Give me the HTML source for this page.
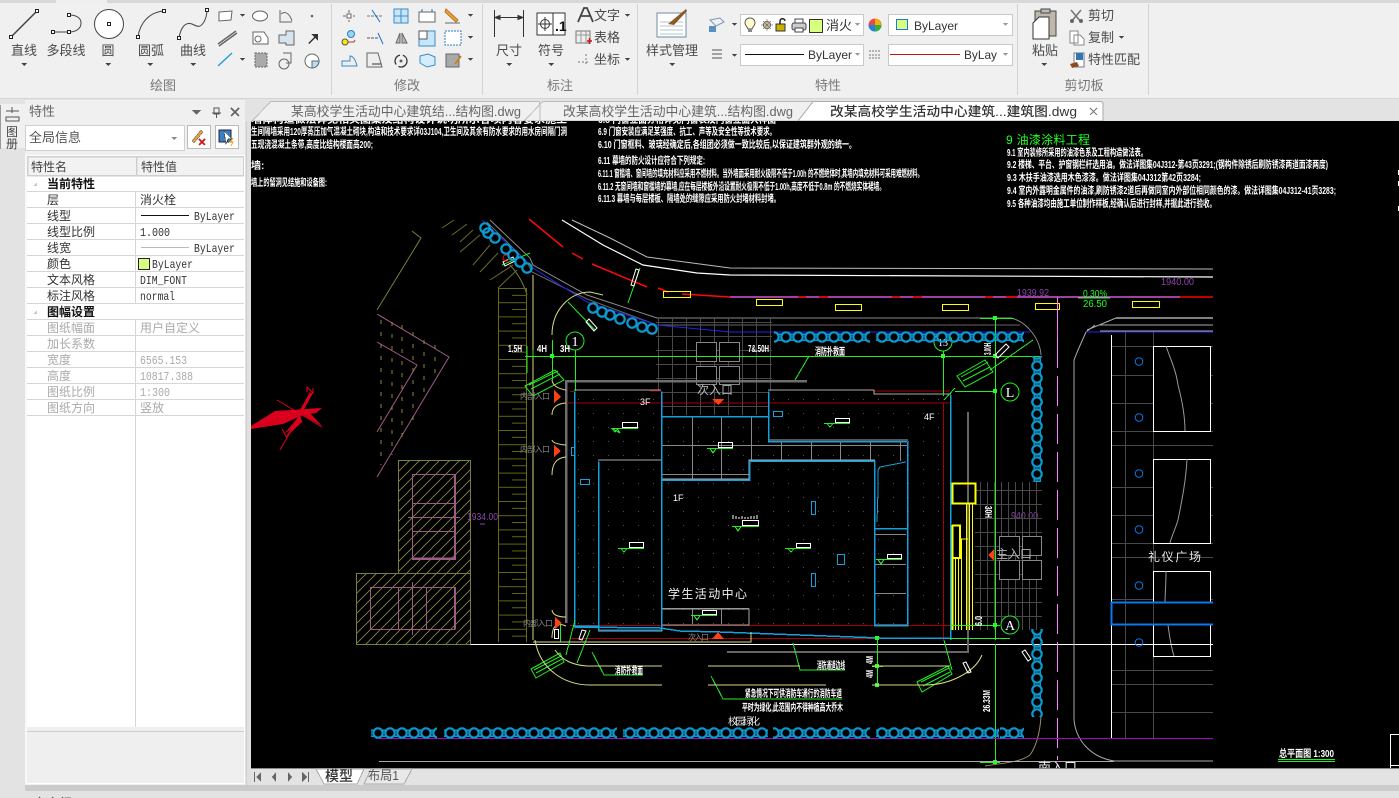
<!DOCTYPE html>
<html lang="zh"><head><meta charset="utf-8"><title>CAD</title>
<style>
html,body{margin:0;padding:0;background:#e3e3e3;width:1399px;height:798px;overflow:hidden}
svg{display:block;position:absolute;left:0;top:0}
text{font-family:"Liberation Sans","Noto Sans CJK SC",sans-serif}
.r{font-size:13px;fill:#4a4a4a;text-anchor:middle}
.rs{font-size:13px;fill:#4a4a4a}
.g{font-size:13px;fill:#777;text-anchor:middle}
.t{font-size:12px;fill:#333;font-family:"Liberation Mono","WenQuanYi Zen Hei","Noto Sans CJK SC",monospace}
.d{font-size:12px;fill:#aaa;font-family:"Liberation Mono","WenQuanYi Zen Hei","Noto Sans CJK SC",monospace}
.b{font-size:12px;fill:#111;font-weight:700;font-family:"Liberation Sans","Noto Sans CJK SC",sans-serif}
.c{font-size:10px;fill:#fff;font-weight:700;font-family:"Liberation Sans","Noto Sans CJK SC",sans-serif}
.n{fill:none}
</style></head><body>
<svg width="1399" height="798" viewBox="0 0 1399 798" xmlns="http://www.w3.org/2000/svg" shape-rendering="crispEdges">
<defs>
<pattern id="grid" width="14" height="14" patternUnits="userSpaceOnUse"><path d="M0 .5H14M.5 0V14" stroke="#484848" fill="none"/></pattern>
<pattern id="gridR" width="7" height="14" patternUnits="userSpaceOnUse"><path d="M0 .5H7M.5 0V14" stroke="#484848" fill="none"/></pattern>
<pattern id="dots" width="15" height="14" patternUnits="userSpaceOnUse"><rect x="8" y="7" width="1" height="1" fill="#505050"/></pattern>
<pattern id="hatch" width="10" height="10" patternUnits="userSpaceOnUse"><path d="M-2 12L12 -2M-2 2L2 -2M8 12L12 8" stroke="#8a8a4a" stroke-width=".8" fill="none" shape-rendering="auto"/></pattern>
<pattern id="tb" width="12" height="12" patternUnits="userSpaceOnUse" patternTransform="translate(0,727)"><circle cx="6" cy="6" r="4.700" fill="none" stroke="#0b9ad0" stroke-width="2.200" shape-rendering="auto"/><path d="M0 9H3M9 9H12M0 3H2M10 3H12" stroke="#0b9ad0" stroke-width="1.500"/></pattern>
<pattern id="tt" width="12" height="12" patternUnits="userSpaceOnUse" patternTransform="translate(0,331)"><circle cx="6" cy="6" r="4.700" fill="none" stroke="#0b9ad0" stroke-width="2.200" shape-rendering="auto"/><path d="M0 9H3M9 9H12M0 3H2M10 3H12" stroke="#0b9ad0" stroke-width="1.500"/></pattern>
<pattern id="tv" width="12" height="12" patternUnits="userSpaceOnUse" patternTransform="translate(1031,0)"><circle cx="6" cy="6" r="4.700" fill="none" stroke="#0b9ad0" stroke-width="2.200" shape-rendering="auto"/><path d="M3 0V3M3 9V12M9 0V2M9 10V12" stroke="#0b9ad0" stroke-width="1.500"/></pattern>
<pattern id="park" width="29" height="14.2" patternUnits="userSpaceOnUse" patternTransform="translate(498,288)"><path d="M0 .5H29M14 7.5H29" stroke="#5f6a10" fill="none"/></pattern>
<clipPath id="cv"><rect x="251" y="121" width="1148" height="647"/></clipPath>
<clipPath id="cb"><rect x="742" y="15" width="112" height="20"/></clipPath>
</defs>

<!-- chrome background -->
<rect width="1399" height="798" fill="#e3e3e3"/>
<rect x="0" y="0" width="1399" height="3" fill="#d8d8d8"/>
<rect x="56" y="0" width="51" height="3" fill="#efefef"/>
<rect x="0" y="3" width="1399" height="95" fill="#f0f0f0"/>
<rect x="0" y="98" width="1399" height="1" fill="#d5d5d5"/>
<g fill="#d2d2d2"><rect x="331" y="4" width="1" height="91"/><rect x="482" y="4" width="1" height="91"/><rect x="637" y="4" width="1" height="91"/><rect x="1017" y="4" width="1" height="91"/><rect x="1148" y="4" width="1" height="91"/></g>

<!-- ribbon labels -->
<text class="r" x="24" y="55">直线</text><text class="r" x="66" y="55">多段线</text><text class="r" x="108" y="55">圆</text><text class="r" x="151" y="55">圆弧</text><text class="r" x="193" y="55">曲线</text>
<text class="g" x="163" y="90">绘图</text><text class="g" x="407" y="90">修改</text><text class="g" x="560" y="90">标注</text><text class="g" x="828" y="90">特性</text><text class="g" x="1084" y="90">剪切板</text>
<text class="r" x="509" y="55">尺寸</text><text class="r" x="551" y="55">符号</text><text class="rs" x="594" y="20">文字</text><text class="rs" x="594" y="42">表格</text><text class="rs" x="594" y="64">坐标</text>
<text class="r" x="672" y="55">样式管理</text><text class="r" x="1045" y="55">粘贴</text>
<text class="rs" x="1088" y="20">剪切</text><text class="rs" x="1088" y="42">复制</text><text class="rs" x="1088" y="64">特性匹配</text>
<!-- dropdown arrows -->
<g fill="#444"><path d="M21 63h6l-3 3zM105 63h6l-3 3zM147 63h6l-3 3zM190 63h6l-3 3zM240 14h5l-2.500 3zM240 58h5l-2.500 3zM468 14h5l-2.500 3zM468 36h5l-2.500 3zM468 58h5l-2.500 3zM506 63h6l-3 3zM548 63h6l-3 3zM625 14h5l-2.500 3zM625 58h5l-2.500 3zM669 63h6l-3 3zM732 23h5l-2.500 3zM732 54h5l-2.500 3zM1041 63h6l-3 3zM1119 36h5l-2.500 3z"/></g>
<!-- big draw icons -->
<g shape-rendering="auto" fill="none" stroke="#444">
<path d="M11 37L37 11" stroke-width="1.500"/>
<path d="M53 32H69M69 15C78 15 81 19 81 23C81 28 77 32 69 32"/>
<circle cx="109" cy="24" r="14.500" fill="#fff"/>
<path d="M138 37C140 22 150 12 164 11"/>
<path d="M179 38C181 26 186 22 192 24C198 27 200 28 204 22C206 18 207 14 207 10"/>
</g>
<g fill="#fff" stroke="#222"><rect x="9.500" y="35.500" width="3" height="3"/><rect x="35.500" y="9.500" width="3" height="3"/><rect x="51.500" y="30.500" width="3" height="3"/><rect x="67.500" y="30.500" width="3" height="3"/><rect x="67.500" y="13.500" width="3" height="3"/><rect x="107.500" y="22.500" width="3" height="3"/><rect x="136.500" y="35.500" width="3" height="3"/><rect x="162.500" y="9.500" width="3" height="3"/><rect x="177.500" y="36.500" width="3" height="3"/><rect x="205.500" y="8.500" width="3" height="3"/></g>
<!-- small draw icons -->
<g shape-rendering="auto" fill="none" stroke="#666">
<path d="M219 12L232 11L231 20L219 21Z" fill="#fff"/>
<ellipse cx="260" cy="16" rx="7.500" ry="5" fill="#fff"/>
<path d="M280 10V22H292M281 14C286 10 290 15 292 21"/>
<circle cx="312" cy="16" r=".8" fill="#444"/>
<path d="M218 44L236 31M219 46L237 33" stroke-width="1.500"/>
<path d="M253 32H264L268 38V44H253Z" fill="#fff"/><circle cx="258" cy="39" r="3"/>
<path d="M279 35H286V31H294V45H286V43H279Z" fill="#d6e4f0"/>
<path d="M218 66L232 53" stroke="#1a9ae0" stroke-width="1.300"/>
<path d="M255 53H267V67H255Z" fill="#aaa" stroke-dasharray="2 1"/>
<path d="M279 64a5 5 0 1 0 10 0a5 5 0 1 0-10 0M283 53H291V63H286" fill="#eee"/>
<circle cx="312" cy="61" r="7" fill="#fff"/><path d="M312 61H319A7 7 0 0 1 312 68Z" fill="#aee0fa"/>
</g>
<path d="M308 43L316 35L317 36L309 44ZM311 34H318V41Z" fill="#333"/>
<!-- modify icons -->
<g shape-rendering="auto" fill="none" stroke="#666">
<path d="M343 16H355M349 10V22" stroke-dasharray="3 2"/><rect x="347" y="14" width="4" height="4" fill="#fff"/>
<path d="M367 16H383" stroke="#777" stroke-dasharray="3 1"/><path d="M372 10L380 22" stroke="#1a70c0"/>
<path d="M394 9H408V23H394ZM401 9V23M394 16H408" stroke="#3a8cc8" fill="#c8e6fa"/>
<path d="M419 12H435V22H419Z" fill="#fff"/><path d="M422 9V12M432 9V12" stroke="#1a70c0"/>
<path d="M446 9L458 20L456 22L445 12Z" fill="#e9a23b" stroke="#b8791c"/><path d="M445 23H460"/>
<circle cx="351" cy="34" r="3.500" fill="#9ad2f4" stroke="#2a80c0"/><circle cx="345" cy="42" r="3" fill="#ffe800" stroke="#555"/><path d="M348 42H354L355 40" stroke="#b03a20"/>
<path d="M367 38H378" stroke="#555" stroke-dasharray="3 1"/><path d="M378 33L383 44" stroke="#1a70c0"/>
<path d="M396 43L400 33V43ZM402 33L407 43H402Z" fill="#bbb"/>
<rect x="419" y="31" width="16" height="15" fill="#c8e6fa" stroke="#3a8cc8"/><rect x="419" y="31" width="8" height="8" fill="#fff" stroke="#555"/>
<rect x="445" y="31" width="16" height="14" fill="#fff" stroke-dasharray="2 1" stroke="#2a80c0"/>
<path d="M342 61H350V56C354 56 356 62 357 66H342Z" stroke="#3a8cc8" fill="#eee"/>
<path d="M367 53H378L382 67H367Z" fill="#eee"/><path d="M372 64H381" stroke="#333"/>
<circle cx="401" cy="61" r="6" stroke="#333" stroke-dasharray="12 3" stroke-width="1.300"/><circle cx="401" cy="61" r="1" fill="#333"/>
<path d="M420 56L428 54L435 57V65L427 67L420 63Z" stroke="#3a8cc8" fill="#d5edfb"/>
<rect x="446" y="54" width="13" height="13" fill="#aaa"/>
<path d="M455 64L461 56" stroke="#c9802a" stroke-width="2"/>
</g>
<!-- annotate icons -->
<g shape-rendering="auto" fill="none" stroke="#333">
<path d="M494.500 10V37M523.500 10V37M495 17.500H523" />
<path d="M495 17.500L500 15.500V19.500ZM523 17.500L518 15.500V19.500Z" fill="#333"/>
<rect x="537" y="13" width="28" height="22" fill="#fff"/><path d="M553 13V35"/><circle cx="545" cy="24" r="4.500"/><path d="M538 24H552M545 17V31"/>
<path d="M578 22L584 8H587L593 22M581 16H590" stroke="#444" stroke-width="1.800"/>
<rect x="576" y="31" width="14" height="12" fill="#eee" stroke="#777"/><path d="M576 35H590M581 31V43M586 31V43" stroke="#999"/>
<path d="M587 41H592M589.500 38V44" stroke="#d01010" stroke-width="1.500"/>
<path d="M578 62H590M586 54V66" stroke="#777" stroke-dasharray="2 2"/>
</g>
<text x="555" y="31" font-size="14" font-weight="700" fill="#111">.1</text>
<!-- style icon -->
<g shape-rendering="auto">
<rect x="657" y="13" width="29" height="24" fill="#fff" stroke="#6f8aa3"/>
<path d="M660 22H683M660 26H683M660 30H683M660 34H683" stroke="#b5c3d2"/>
<path d="M668 24L686 9L687 11L674 25Z" fill="#8a5a24"/>
</g>
<!-- properties left icons -->
<g shape-rendering="auto" fill="none">
<path d="M710 20L720 18L724 22L716 26Z" stroke="#7a9ab8"/><rect x="709" y="26" width="7" height="6" fill="#5b8fc0"/>
<path d="M712 50H722M712 54H722M712 58H722" stroke="#555"/>
<circle cx="875" cy="25" r="6.500" fill="#e84a50"/><path d="M875 25V18.500A6.500 6.500 0 0 1 881 25Z" fill="#f5b000"/><path d="M875 25H881.500A6.500 6.500 0 0 1 875 31.500Z" fill="#30b040"/><path d="M875 25V31.500A6.500 6.500 0 0 1 868.500 25Z" fill="#2080e0"/>
<path d="M869 51H881M869 55H881M869 58H881" stroke="#777" stroke-dasharray="2 1"/>
</g>
<!-- combos -->
<g fill="#fff" stroke="#c9c9c9"><rect x="740.500" y="14.500" width="123" height="21"/><rect x="740.500" y="44.500" width="123" height="21"/><rect x="888.500" y="14.500" width="124" height="21"/><rect x="888.500" y="44.500" width="124" height="21"/></g>
<!-- layer combo icons -->
<g shape-rendering="auto" fill="none">
<path d="M750 18C746.500 18 745 20.500 745 23C745 25.500 747.500 27 748 29H752C752.500 27 755 25.500 755 23C755 20.500 753.500 18 750 18Z" fill="#fffcd0" stroke="#555"/><rect x="748" y="29" width="4" height="3" fill="#888"/>
<circle cx="767" cy="25" r="3.500" fill="#fff0b0" stroke="#555"/><path d="M761 25H773M767 19V31M763 21L771 29M771 21L763 29" stroke="#777" stroke-width=".7"/>
<rect x="776" y="24" width="9" height="7" fill="#c8b000" stroke="#333"/><path d="M780 24V21C780 18 785 18 785 21" stroke="#222" stroke-width="1.500"/>
<rect x="792" y="23" width="14" height="7" rx="2" fill="#ccc" stroke="#444"/><rect x="795" y="19" width="8" height="4" fill="#fff" stroke="#444"/><rect x="795" y="28" width="8" height="4" fill="#fff" stroke="#444"/>
</g>
<rect x="809.500" y="19.500" width="13" height="13" fill="#d9ff80" stroke="#333"/>
<g clip-path="url(#cb)"><text x="826" y="30" font-size="13" fill="#333">消火</text></g>
<rect x="896.500" y="19.500" width="11" height="10" fill="#d9ff80" stroke="#1c78d0"/>
<text x="914" y="30" font-size="12" fill="#333">ByLayer</text>
<path d="M745 54.500H804" stroke="#111"/><text x="808" y="59" font-size="12" fill="#333">ByLayer</text>
<path d="M890 54.500H960" stroke="#c01010"/><text x="964" y="59" font-size="12" fill="#333" textLength="33" lengthAdjust="spacingAndGlyphs">ByLay</text>
<g fill="#999"><path d="M855 23h5l-2.500 3zM855 53h5l-2.500 3zM1003 23h5l-2.500 3zM1003 53h5l-2.500 3z"/></g>
<!-- clipboard icons -->
<g shape-rendering="auto">
<path d="M1035 11H1056V36H1035Z" fill="#bfb7ab" stroke="#444"/><path d="M1041 9H1050V13H1041Z" fill="#bbb" stroke="#444"/>
<path d="M1033 23L1039 17H1049V39H1033Z" fill="#fff" stroke="#333"/>
<path d="M1071 10L1081 22M1081 10L1071 22" stroke="#777" stroke-width="1.600"/><circle cx="1072" cy="21" r="2" fill="#666"/><circle cx="1081" cy="21" r="2" fill="#666"/>
<path d="M1070 31H1078V43H1070ZM1074 35H1080L1084 39V45H1074Z" fill="#fff" stroke="#888"/>
<rect x="1074" y="53" width="10" height="14" fill="#fff" stroke="#777"/><rect x="1076" y="53" width="7" height="7" fill="#2f75b8"/>
<path d="M1070 64L1077 62L1079 66L1072 68Z" fill="#8a4a20"/>
</g>

<!-- left strip -->
<rect x="0" y="104" width="25" height="44" fill="#f0f0f0"/><rect x="0" y="105" width="1" height="44" fill="#9a9a9a"/>
<path d="M6 111H19M12 107V113M6 117H19V121H6Z" stroke="#555" fill="none"/>
<text x="6" y="136" font-size="12" fill="#444">图</text><text x="6" y="148" font-size="12" fill="#444">册</text>

<!-- palette panel -->
<rect x="25" y="100" width="220" height="685" fill="#f0f0f0"/>
<text x="29" y="116" font-size="13" fill="#666">特性</text>
<path d="M192 110h9l-4.500 5z" fill="#666"/>
<path d="M214 108h5v6h-5zM216.500 114v4M212 113h9" stroke="#555" fill="none"/>
<path d="M231 108l8 8M239 108l-8 8" stroke="#666" stroke-width="1.600"/>
<rect x="25.500" y="125.500" width="159" height="25" fill="#fff" stroke="#cfcfcf"/>
<text x="29" y="142" font-size="13" fill="#555">全局信息</text><path d="M171 137h6l-3 3z" fill="#888"/>
<rect x="187.500" y="125.500" width="23" height="23" fill="#fff" stroke="#bbb"/><path d="M192 141L201 130L203 132L194 143Z" fill="#e2a53b" stroke="#555" stroke-width=".5"/><path d="M199 139l6 6M205 139l-6 6" stroke="#d01818" stroke-width="1.800"/>
<rect x="215.500" y="125.500" width="23" height="23" fill="#fff" stroke="#bbb"/><rect x="219" y="130" width="12" height="12" fill="#3a80c0" stroke="#224"/><path d="M224 131L232 139L228 139L226 144Z" fill="#fff" stroke="#333" stroke-width=".6"/><path d="M233 138l-3 4h3l-2 4" stroke="#f59a10" fill="none"/>

<rect x="27" y="155" width="217" height="572" fill="#fff"/>
<rect x="27" y="156" width="217" height="20" fill="#f2f2f2"/>
<path d="M27.500 156V176M136.500 156V176M243.500 156V176M27 156.500H244M27 175.500H244" stroke="#cfcfcf" stroke-width="1.500" fill="none"/>
<g stroke="#d6d6d6"><path d="M27 191.500H244M27 207.500H244M27 223.500H244M27 239.500H244M27 255.500H244M27 271.500H244M27 287.500H244M27 303.500H244M27 319.500H244M27 335.500H244M27 351.500H244M27 367.500H244M27 383.500H244M27 399.500H244M27 415.500H244"/><path d="M135.500 191V303M135.500 319V727"/></g>
<path d="M33 186l4-4v4zM33 314l4-4v4z" fill="#c8c8c8"/>
<text x="31" y="171" font-size="12" fill="#444">特性名</text><text x="141" y="171" font-size="12" fill="#444">特性值</text>
<text class="b" x="47" y="188">当前特性</text><text class="b" x="47" y="316">图幅设置</text>
<g>
<text class="t" x="47" y="204">层</text><text class="t" x="140" y="204">消火栓</text>
<text class="t" x="47" y="220">线型</text><text class="t" x="194" y="220" textLength="41" lengthAdjust="spacingAndGlyphs">ByLayer</text>
<text class="t" x="47" y="236">线型比例</text><text class="t" x="140" y="236" textLength="30" lengthAdjust="spacingAndGlyphs">1.000</text>
<text class="t" x="47" y="252">线宽</text><text class="t" x="194" y="252" textLength="41" lengthAdjust="spacingAndGlyphs">ByLayer</text>
<text class="t" x="47" y="268">颜色</text><text class="t" x="152" y="268" textLength="41" lengthAdjust="spacingAndGlyphs">ByLayer</text>
<text class="t" x="47" y="284">文本风格</text><text class="t" x="140" y="284" textLength="47" lengthAdjust="spacingAndGlyphs">DIM_FONT</text>
<text class="t" x="47" y="300">标注风格</text><text class="t" x="140" y="300" textLength="35" lengthAdjust="spacingAndGlyphs">normal</text>
<text class="d" x="47" y="332">图纸幅面</text><text class="d" x="140" y="332">用户自定义</text>
<text class="d" x="47" y="348">加长系数</text>
<text class="d" x="47" y="364">宽度</text><text class="d" x="140" y="364" textLength="47" lengthAdjust="spacingAndGlyphs">6565.153</text>
<text class="d" x="47" y="380">高度</text><text class="d" x="140" y="380" textLength="53" lengthAdjust="spacingAndGlyphs">10817.388</text>
<text class="d" x="47" y="396">图纸比例</text><text class="d" x="140" y="396" textLength="30" lengthAdjust="spacingAndGlyphs">1:300</text>
<text class="d" x="47" y="412">图纸方向</text><text class="d" x="140" y="412">竖放</text>
</g>
<path d="M141 215.500H189" stroke="#111"/><path d="M141 247.500H189" stroke="#bbb"/>
<rect x="138.500" y="258.500" width="11" height="11" fill="#d9ff80" stroke="#222"/>
<rect x="27" y="727" width="217" height="56" fill="#efefef"/><path d="M27 731.500H244" stroke="#ccc"/>
<path d="M26 783.500H244M26 155V783M244.500 155V784" stroke="#fff"/>
<rect x="245" y="121" width="6" height="664" fill="#e0e0e0"/><rect x="246" y="121" width="1" height="664" fill="#d0d0d0"/>

<!-- tabs -->
<rect x="245" y="99" width="1154" height="22" fill="#e3e3e3"/>
<path d="M252 121L271 101.500H539.500V121Z" fill="#f0f0f0" stroke="#bcbcbc"/>
<path d="M524 121L543 101.500H812V121Z" fill="#f0f0f0" stroke="#bcbcbc"/>
<path d="M540 121L540 104L543 101.500" fill="#f0f0f0" stroke="#bcbcbc"/>
<path d="M798 121L813 101.500H1100Q1103 101.500 1103 104V121Z" fill="#fff" stroke="#aaa"/>
<text x="291" y="116" font-size="13" fill="#666" textLength="230" lengthAdjust="spacingAndGlyphs">某高校学生活动中心建筑结...结构图.dwg</text>
<text x="563" y="116" font-size="13" fill="#666" textLength="230" lengthAdjust="spacingAndGlyphs">改某高校学生活动中心建筑...结构图.dwg</text>
<text x="830" y="116" font-size="13" fill="#333" font-weight="500" textLength="247" lengthAdjust="spacingAndGlyphs">改某高校学生活动中心建筑...建筑图.dwg</text>
<path d="M1090 108l7 7M1097 108l-7 7" stroke="#777" stroke-width="1.400"/>

<!-- canvas -->
<rect x="251" y="121" width="1148" height="647" fill="#000"/>
<g clip-path="url(#cv)">
<g>
<text class="c" x="251" y="123" textLength="316" lengthAdjust="spacingAndGlyphs">墙体构造做法详见相关图集及结构设计说明所示各项内容要求施工</text>
<text class="c" x="251" y="135" textLength="316" lengthAdjust="spacingAndGlyphs">生间隔墙采用120厚蒸压加气混凝土砌块,构造和技术要求详03J104,卫生间及其余有防水要求的用水房间隔门洞</text>
<text class="c" x="251" y="148" textLength="122" lengthAdjust="spacingAndGlyphs">五现浇混凝土条带,高度比结构楼面高200;</text>
<text class="c" x="251" y="169">墙:</text>
<text class="c" x="251" y="186" textLength="76" lengthAdjust="spacingAndGlyphs">墙上的留洞见结施和设备图:</text>
<text class="c" x="598" y="123" textLength="178" lengthAdjust="spacingAndGlyphs">6.8 门窗立面分格详见门窗表及门窗立面大样图</text>
<text class="c" x="598" y="135" textLength="178" lengthAdjust="spacingAndGlyphs">6.9 门窗安装应满足某强度、抗工、声等及安全性等技术要求。</text>
<text class="c" x="598" y="148" textLength="258" lengthAdjust="spacingAndGlyphs">6.10 门窗框料、玻璃经确定后,各组团必须做一致比较后,以保证建筑群外观的统一。</text>
<text class="c" x="598" y="164" textLength="107" lengthAdjust="spacingAndGlyphs">6.11 幕墙的防火设计应符合下列规定:</text>
<text class="c" x="598" y="177" textLength="325" lengthAdjust="spacingAndGlyphs">6.11.1 窗槛墙、窗间墙的填充材料应采用不燃材料。当外墙面采用耐火极限不低于1.00h 的不燃绝体时,其墙内填充材料可采用难燃材料。</text>
<text class="c" x="598" y="190" textLength="287" lengthAdjust="spacingAndGlyphs">6.11.2 无窗间墙和窗槛墙的幕墙,应在每层楼板外沿设置耐火极限不低于1.00h,高度不低于0.8m 的不燃烧实体裙墙。</text>
<text class="c" x="598" y="202" textLength="182" lengthAdjust="spacingAndGlyphs">6.11.3 幕墙与每层楼板、隔墙处的缝隙应采用防火封堵材料封堵。</text>
<text x="1006" y="144" font-size="12" fill="#22ff22" textLength="84" lengthAdjust="spacing">9 油漆涂料工程</text>
<text class="c" x="1007" y="156" textLength="140" lengthAdjust="spacingAndGlyphs">9.1 室内装修所采用的油漆色系及工程构造做法表。</text>
<text class="c" x="1007" y="168" textLength="321" lengthAdjust="spacingAndGlyphs">9.2 楼梯、平台、护窗钢栏杆选用油。做法详图集04J312-第43页3291;(钢构件除锈后刷防锈漆两道面漆两度)</text>
<text class="c" x="1007" y="181" textLength="194" lengthAdjust="spacingAndGlyphs">9.3 木扶手油漆选用木色漆漆。做法详图集04J312第42页3284;</text>
<text class="c" x="1007" y="194" textLength="329" lengthAdjust="spacingAndGlyphs">9.4 室内外露明金属件的油漆,刷防锈漆2道后再做同室内外部位相同颜色的漆。做法详图集04J312-41页3283;</text>
<text class="c" x="1007" y="207" textLength="209" lengthAdjust="spacingAndGlyphs">9.5 各种油漆均由施工单位制作样板,经确认后进行封样,并据此进行验收。</text>
</g>
<path d="M1398.500 170V175M1398.500 181V186M1398.500 206V211" stroke="#fff"/>
<g shape-rendering="auto" fill="none">
<!-- top road -->
<path d="M562 220L603 245L643 265L697 273L730 275L1213 277" stroke="#fff" stroke-width="1.200"/>
<path d="M572 220L610 238L647 257L730 268L1213 269" stroke="#bbb"/>
<path d="M529 219L563 247M572 253L583 259M592 264L647 287M658 288L668 292M682 294L730 297" stroke="#ff0808" stroke-width="1.500"/>
<path d="M730 297H1180" stroke="#ff66ff" stroke-width="1.200"/>
<path d="M798 297H806M819 297H828M892 297H900M913 297H922M985 297H993M1006 297H1017M1180 297H1213" stroke="#f00" stroke-width="1.500"/>
<path d="M490 220L530 258L533 265L587 295L657 318H1011C1028 322 1040 340 1041 355" stroke="#8a8a8a"/>
<path d="M487 222L527 262L532 272L587 299L657 325H1020" stroke="#666"/>
<path d="M482 220L533 268L587 302L657 325L730 332H1030" stroke="#2222ee"/>
<path d="M552 335C552 310 570 292 590 292L603 295" stroke="#d8d880"/>
<path d="M533 275V640" stroke="#d8d880"/>
<path d="M510 265Q522 278 527 295" stroke="#787a30"/>
<!-- olive slashes -->
<path d="M442 228L454 220M452 235L467 224M460 242L473 230M460 252L480 235M473 265L490 245M480 272L498 253M490 280L513 265M498 288L517 270" stroke="#6b6b28"/>
<path d="M412 231L421 238L377 310" stroke="#7d7d3a"/>
<path d="M377 314L449 357L377 477M377 342L417 365L377 432" stroke="#a05a86"/>
<path d="M381 320V465M392 322V455M402 325V440M413 332V425M424 340V400M435 345V380" stroke="#8a8a38" stroke-dasharray="4 8"/>
<!-- green leaders top -->
<path d="M502 265L530 253M640 268L628 303M568 302L595 330" stroke="#22ee22"/>
<path d="M503 262l10-5 2 4-10 5zM631 285l5-16 3 1-5 16zM589 319l8 9-3 3-8-9z" stroke="#fff"/>
<circle cx="506" cy="258" r="3" stroke="#f00"/>
</g>
<!-- yellow parking rects -->
<g fill="none" stroke="#ffff00"><rect x="663.500" y="291.500" width="27" height="6"/><rect x="756.500" y="299.500" width="26" height="6"/><rect x="835.500" y="304.500" width="26" height="6"/><rect x="942.500" y="304.500" width="26" height="6"/><rect x="1035.500" y="303.500" width="24" height="6"/><rect x="1132.500" y="301.500" width="27" height="6"/></g>
<path d="M1057.500 297V343" stroke="#ff66ff"/>
<g font-size="10" fill="#8a44a8"><text x="1017" y="296" textLength="32" lengthAdjust="spacingAndGlyphs">1939.92</text><text x="1161" y="285" textLength="33" lengthAdjust="spacingAndGlyphs">1940.00</text><text x="467" y="520" textLength="31" lengthAdjust="spacingAndGlyphs">1934.00</text><text x="1011" y="519" textLength="27" lengthAdjust="spacingAndGlyphs">940.00</text></g>
<g font-size="10" fill="#22ff22"><text x="1083" y="297" textLength="24" lengthAdjust="spacingAndGlyphs">0.30%</text><text x="1083" y="307" textLength="24" lengthAdjust="spacingAndGlyphs">26.50</text></g>
<path d="M1078 298H1110" stroke="#22ee22"/>
<!-- parking strip -->
<rect x="498" y="288" width="29" height="354" fill="url(#park)"/>
<path d="M498.500 288V642M526.500 288V642" stroke="#6a6a14"/>
<!-- hatched buildings -->
<rect x="398.500" y="460.500" width="72" height="113" fill="url(#hatch)" stroke="#7d7d3a"/>
<rect x="356.500" y="573.500" width="114" height="71" fill="url(#hatch)" stroke="#7d7d3a"/>
<g fill="none" stroke="#a05a86"><rect x="412.500" y="474.500" width="43" height="85" stroke-width="1"/><path d="M412 503.500H455M408 517.500H460M412 531.500H455M370.500 587.500H455V629.500H370.500ZM398.500 587V629M412.500 582V635M426.500 587V629"/><path d="M455 474V559M412 558.500H456M455 587V629" stroke-width="2"/></g>
<path d="M480 524h5" stroke="#8a44a8"/>
<path d="M470.500 644.500H1213" stroke="#fff"/>
<!-- compass -->
<g shape-rendering="auto" fill="#d8001c">
<path d="M251 426L275 411L322 408L316 413L303 415L283 424L251 429Z"/>
<path d="M285 438L300 415L305 430L302 422Z"/><path d="M300 415L290 430L284 434Z"/><path d="M303 415L322 426L309 412Z"/><path d="M300 410L310 392L312 394L303 411Z"/>
<path d="M277 400L322 427M280 450L313 392M282 429L287 438" stroke="#e0001c" fill="none"/>
<path d="M307 392V387L313 393V388" stroke="#e0001c" fill="none"/>
</g>
<!-- plaza grids -->
<rect x="656" y="318" width="116" height="97" fill="url(#grid)"/>
<rect x="975" y="482" width="67" height="148" fill="url(#gridR)"/>
<g fill="#000" stroke="#888"><rect x="696.500" y="342.500" width="20" height="19"/><rect x="719.500" y="342.500" width="20" height="19"/><rect x="696.500" y="366.500" width="20" height="18"/><rect x="719.500" y="366.500" width="20" height="18"/><rect x="999.500" y="536.500" width="20" height="19"/><rect x="1022.500" y="536.500" width="19" height="19"/><rect x="999.500" y="560.500" width="20" height="19"/><rect x="1022.500" y="560.500" width="19" height="19"/></g>
<!-- building -->
<path d="M574 391H661V416H768V391H874V395H950V626H574Z" fill="#000"/>
<path d="M574 391H661V416H768V391H874V395H950V626H574Z" fill="url(#dots)"/>
<path d="M568 403H950M570 391.500H574M570 625.500H950M943.500 403V640M570 638.500H950M650 391H661M874 391H950" stroke="#a80000" fill="none"/>
<path d="M565 381H807M566 381V623" stroke="#6e6e6e" stroke-width="2.500" fill="none"/>
<path d="M968 412V640M727 652H968V640" stroke="#666" stroke-width="2" fill="none"/>
<!-- interior cells -->
<path d="M692.500 416V480M721.500 416V480M751.500 416V461M662 445.500H907M662 474.500H749M781.500 441V461M811.500 441V461M840.500 441V461M870.500 441V461M900.500 441V461M875 534.500H906M875 564.500H906M875 593.500H906M662 608.500H749M692.500 608V624M721.500 608V624" stroke="#888" fill="none"/>
<g fill="none" stroke="#aaa" stroke-width="1.300"><path d="M574 390H661M768 390H874V394H951M662 417H768M769 440H908M598 460H661M875 460H749V479H662M598 631H662V625M662 609H749V625H662M875 529H907M875 625H907"/></g>
<g fill="none" stroke="#14a0dc" stroke-width="1.500"><path d="M574.500 391.500V626H598M598.500 461.500V630H661M661.500 391.500V630M662 416.500H768M768.500 391.500V441.500H907M907.500 441.500V625.500H874.500V461H749.500V480H662M950.500 395V640M875 528.500H907"/><path d="M877 522L878 490V470L880 467L906 462" stroke-width="1"/><path d="M574 627L660 628L680 631L720 632L800 635L880 638H950" /><rect x="773.500" y="411.500" width="9" height="5" stroke-width="1"/><rect x="580.500" y="479.500" width="9" height="5" stroke-width="1"/><rect x="811.500" y="501.500" width="4" height="13" stroke-width="1"/><rect x="837.500" y="554.500" width="7" height="10" stroke-width="1"/><rect x="811.500" y="573.500" width="4" height="13" stroke-width="1"/><rect x="571.500" y="447.500" width="3" height="8" stroke-width="1"/></g>
<!-- yellow steps -->
<g fill="none" stroke="#ffff00"><rect x="952.500" y="483.500" width="23" height="20" stroke-width="2"/><path d="M952 525.500H960V558H952M952.500 525V630M960 525V558" stroke-width="2"/><path d="M955.500 558V630M958.500 558V630M961.500 539V630M966.500 504V630M969.500 504V630M972.500 504V630M961 539H968"/></g>
<!-- green axes -->
<g fill="none" stroke="#22ee22"><path d="M525 356.500H1040M552.500 340V380M575.500 346V391M943.500 351V396M955 391.500H996M995.500 318V640M980 318.500H1014M950 625.500H1000M950 638.500H1010"/>
<path d="M527 346V373M533 350V356M944 400L955 388M990 370L1033 340M995.500 762V644M980 762.500H1000"/>
<path d="M809 356L795 380M809 356.500H845" /><path d="M592 652L604 675H643M793 643L800 670H845M711 676L723 699H842M877.500 638V685M872 666.500H883M872 685H883" />
<path d="M575 620L566 655M590 630L577 663M560.500 625V642M944 640L952 670"/></g>
<rect x="993" y="316" width="4" height="4" fill="#2f2"/><rect x="875" y="636" width="4" height="4" fill="#2f2"/><rect x="875" y="664" width="4" height="4" fill="#2f2"/><rect x="875" y="683" width="4" height="4" fill="#2f2"/><rect x="993" y="354" width="4" height="4" fill="#2f2"/><rect x="941" y="354" width="4" height="4" fill="#2f2"/><rect x="550" y="354" width="4" height="4" fill="#2f2"/><rect x="993" y="389" width="4" height="4" fill="#2f2"/><rect x="993" y="623" width="4" height="4" fill="#2f2"/><rect x="993" y="760" width="4" height="4" fill="#2f2"/>
<!-- axis bubbles -->
<g shape-rendering="auto" fill="#000" stroke="#22ee22"><circle cx="575" cy="341" r="9"/><circle cx="943" cy="342" r="9"/><circle cx="1010" cy="392" r="9"/><circle cx="1010" cy="625" r="9"/></g>
<g font-size="14" fill="#fff" text-anchor="middle"><text x="575" y="346" style="font-family:'Liberation Serif',serif">1</text><text x="943" y="346" font-size="10" style="font-family:'Liberation Serif',serif">13</text><text x="1010" y="397" style="font-family:'Liberation Serif',serif">L</text><text x="1010" y="630" style="font-family:'Liberation Serif',serif">A</text></g>
<!-- green slanted stair boxes -->
<g shape-rendering="auto" fill="none" stroke="#22ee22"><path d="M525 386L555 370L564 380L533 396ZM529 385L558 371M531 389L560 374"/><path d="M957 376L985 360L993 372L965 387ZM961 377L988 362M963 381L990 367" /><path d="M531 669L560 653L564 662L536 678ZM534 670L561 656M536 673L562 659"/><path d="M917 682L948 666L952 674L922 692ZM921 682L949 668M923 686L950 672"/></g>
<!-- beige road arcs -->
<g shape-rendering="auto" fill="none" stroke="#d8d880">
<path d="M533 642H751V632M535 640C540 670 565 685 590 685H662M555 650C562 660 572 665 587 666H662M708 666H800M708 685H826M872 666H950M872 685H925C950 685 975 672 982 655"/>
<path d="M552 380Q553 388 566 390M552 415Q552 404 566 403M552 440Q553 444 566 445M552 475Q552 458 566 457M552 610Q553 617 566 617M552 638Q552 620 566 626"/>
</g>
<!-- right side -->
<g shape-rendering="auto" fill="none">
<path d="M1057.500 300V760" stroke="#ff80ff" stroke-dasharray="30 8"/>
<path d="M1086 332L1078 350L1074 360V720C1076 740 1090 757 1114 761H1213" stroke="#aaa"/>
<path d="M1095 325L1086 332M1116 318L1087 330M1100 325H1213M1100 331H1213" stroke="#aaa"/>
<path d="M1116 318H1213" stroke="#fff"/>
<path d="M1086 332H1213" stroke="#2222ee"/>
<path d="M1041 716C1040 735 1035 748 1030 755C1020 762 1010 762 985 766" stroke="#a08a6a"/>
</g>
<path d="M1125.500 332V738M1153.500 332V738" stroke="#484848"/>
<path d="M1111 346.500H1213M1111 375.500H1213M1111 403.500H1213M1111 431.500H1213M1111 445.500H1213M1111 487.500H1213M1111 515.500H1213M1111 543.500H1213M1111 557.500H1213M1111 599.500H1213M1111 670.500H1213M1111 684.500H1213M1111 712.500H1213" stroke="#484848"/>
<path d="M1111.500 335V738" stroke="#fff"/>
<g fill="#000" stroke="#fff"><rect x="1153.500" y="346.500" width="57" height="85"/><rect x="1153.500" y="459.500" width="57" height="84"/><rect x="1153.500" y="571.500" width="57" height="85"/></g>
<g shape-rendering="auto" fill="none" stroke="#999"><path d="M1166 346C1170 358 1176 370 1178 385C1182 400 1185 415 1185 431M1187 459C1186 480 1182 500 1178 520C1175 530 1172 535 1170 543M1166 571C1166 585 1165 595 1165 602M1168 625C1170 640 1172 650 1174 656"/></g>
<rect x="1111" y="602" width="102" height="23" fill="#000"/>
<path d="M1213 602.500H1111.500V624.500H1213" fill="none" stroke="#0a78f0" stroke-width="2"/>
<path d="M1153.500 603V624M1125.500 603V624" stroke="#484848"/>
<path d="M1111 644.500H1213" stroke="#fff"/>
<g shape-rendering="auto" fill="none" stroke="#0a78f0"><circle cx="1139" cy="361.500" r="3.800"/><circle cx="1139" cy="417.500" r="3.800"/><circle cx="1139" cy="473.500" r="3.800"/><circle cx="1139" cy="529.500" r="3.800"/><circle cx="1139" cy="585.500" r="3.800"/><circle cx="1139" cy="642.500" r="3.800"/></g>
<path d="M376 738.500H1213" stroke="#a800c8"/>
<path d="M379 761.500H1114" stroke="#aaa"/>
<!-- trees -->
<rect x="371" y="727" width="66" height="12" fill="url(#tb)"/><rect x="444" y="727" width="173" height="12" fill="url(#tb)"/><rect x="623" y="727" width="145" height="12" fill="url(#tb)"/><rect x="773" y="727" width="97" height="12" fill="url(#tb)"/><rect x="876" y="727" width="123" height="12" fill="url(#tb)"/><rect x="1000" y="727" width="24" height="12" fill="url(#tb)"/>
<rect x="774" y="331" width="96" height="12" fill="url(#tt)"/><rect x="876" y="331" width="148" height="12" fill="url(#tt)"/>
<rect x="1031" y="356" width="12" height="48" fill="url(#tv)"/><rect x="1031" y="396" width="12" height="86" fill="url(#tv)"/><rect x="1031" y="629" width="12" height="88" fill="url(#tv)"/>
<g shape-rendering="auto" fill="none" stroke="#0b9ad0" stroke-width="2.200"><circle cx="485" cy="228" r="4.700"/><circle cx="488" cy="233" r="4.700"/><circle cx="495" cy="238" r="4.700"/><circle cx="506" cy="249" r="4.700"/><circle cx="513" cy="255" r="4.700"/><circle cx="520" cy="262" r="4.700"/><circle cx="527" cy="268" r="4.700"/><circle cx="593" cy="308" r="4.700"/><circle cx="602" cy="312" r="4.700"/><circle cx="610" cy="315" r="4.700"/><circle cx="620" cy="319" r="4.700"/><circle cx="632" cy="323" r="4.700"/><circle cx="642" cy="327" r="4.700"/><circle cx="652" cy="329" r="4.700"/></g>
<!-- level marks -->
<g><g fill="none" stroke="#fff"><rect x="622.500" y="422.500" width="15" height="5"/><rect x="718.500" y="442.500" width="14" height="5"/><rect x="629.500" y="542.500" width="14" height="5"/><rect x="742.500" y="520.500" width="16" height="5"/><rect x="796.500" y="543.500" width="14" height="4"/><rect x="887.500" y="554.500" width="14" height="4"/><rect x="702.500" y="610.500" width="14" height="4"/><rect x="835.500" y="418.500" width="14" height="4"/></g>
<path d="M612 428.500H638L617 428.500L620 433ZM707 448.500H733M710 448.500L713 453L716 448.500M618 548.500H644M621 548.500L624 552L627 548.500M732 526.500H759M735 526.500L738 531L741 526.500M785 548.500H811M788 548.500L791 552L794 548.500M876 559.500H902M878 559.500L881 564L884 559.500M691 615.500H717M694 615.500L697 620L700 615.500M824 423.500H850M827 423.500L830 427L833 423.500M612 428.500L615 432L618 428.500" stroke="#22ee22" fill="none"/>
<path d="M733 515v4M736 516v3M739 517v2M742 516v3M745 517v2M748 517v2M751 516v3M754 516v3M757 515v4" stroke="#fff" fill="none"/></g>
<!-- orange arrows -->
<g fill="#ff4010"><path d="M554 390L561 397L554 403ZM554 445L561 451L554 457ZM555 617L562 623L555 629ZM712 399H724L718 405ZM712 639L718 632L724 639ZM988 555L994 549V561Z"/></g>
<!-- labels -->
<g fill="#b5b5b5"><text x="697" y="394" font-size="12" textLength="36" lengthAdjust="spacing">次入口</text><text x="996" y="558" font-size="12" textLength="36" lengthAdjust="spacing">主入口</text></g>
<g fill="#8a8a8a" font-size="8"><text x="520" y="399" textLength="30" lengthAdjust="spacing">内部入口</text><text x="520" y="452" textLength="30" lengthAdjust="spacing">内部入口</text><text x="523" y="626" textLength="30" lengthAdjust="spacing">内部入口</text></g>
<text x="688" y="640" font-size="8" fill="#8a8a8a" textLength="21" lengthAdjust="spacing">次入口</text>
<g fill="#fff" font-size="9"><text x="640" y="405">3F</text><text x="924" y="420">4F</text><text x="673" y="501">1F</text></g>
<text x="668" y="598" font-size="12" fill="#f0f0f0" textLength="79" lengthAdjust="spacing">学生活动中心</text>
<text x="1148" y="561" font-size="12" fill="#e8e8e8" textLength="53" lengthAdjust="spacing">礼仪广场</text>
<text x="1038" y="772" font-size="13" fill="#eee" textLength="39" lengthAdjust="spacing">南入口</text>
<text x="728" y="725" font-size="10" fill="#eee" textLength="32" lengthAdjust="spacing">校园绿化</text>
<text class="c" x="815" y="355" textLength="30" lengthAdjust="spacingAndGlyphs">消防扑救面</text>
<text class="c" x="615" y="674" textLength="28" lengthAdjust="spacingAndGlyphs">消防扑救面</text>
<text class="c" x="817" y="669" textLength="28" lengthAdjust="spacingAndGlyphs">消防通道边线</text>
<text class="c" x="745" y="697" textLength="97" lengthAdjust="spacingAndGlyphs">紧急情况下可供消防车通行的消防车道</text>
<text class="c" x="742" y="711" textLength="101" lengthAdjust="spacingAndGlyphs">平时为绿化,此范围内不得种植高大乔木</text>
<text class="c" x="508" y="352" textLength="14" lengthAdjust="spacingAndGlyphs">1.5H</text><text class="c" x="537" y="352" textLength="10" lengthAdjust="spacingAndGlyphs">4H</text><text class="c" x="560" y="352" textLength="10" lengthAdjust="spacingAndGlyphs">3H</text><text class="c" x="748" y="352" textLength="21" lengthAdjust="spacingAndGlyphs">7&amp;.50H</text>
<text class="c" transform="translate(991,355) rotate(-90)" textLength="12" lengthAdjust="spacingAndGlyphs">3.00H</text>
<text class="c" transform="translate(985,506) rotate(90)" textLength="12" lengthAdjust="spacingAndGlyphs">30H</text>
<text class="c" transform="translate(982,626) rotate(-90)" textLength="10" lengthAdjust="spacingAndGlyphs">6.0</text>
<text class="c" transform="translate(990,712) rotate(-90)" textLength="22" lengthAdjust="spacingAndGlyphs">26.33M</text>
<text class="c" transform="translate(873,664) rotate(-90)" textLength="8" lengthAdjust="spacingAndGlyphs">4M</text><text class="c" transform="translate(873,678) rotate(-90)" textLength="8" lengthAdjust="spacingAndGlyphs">4M</text>
<text class="c" x="1279" y="757" textLength="55" lengthAdjust="spacingAndGlyphs">总平面图 1:300</text>
<path d="M1278 759.500H1335M1278 761.500H1335" stroke="#22ee22"/>
<path d="M1390.500 768V734.500H1399M1390 765.500H1399" stroke="#fff" fill="none"/>
<!-- white tick rectangles bottom -->
<g shape-rendering="auto" fill="none" stroke="#fff"><rect x="554.500" y="629.500" width="4" height="9"/><path d="M582 630l-3 9 3 1 4-9zM963 663l5 10 3-1-5-10zM1022 652l6 9 3-2-6-9zM1006 344l-11 11 3 3 11-11z"/></g>
</g>
<path d="M251 768.500H1399" stroke="#8a8a8a"/>
<!-- model tabs -->
<rect x="251" y="769" width="1148" height="16" fill="#e3e3e3"/>
<rect x="0" y="785" width="25" height="6" fill="#e3e3e3"/><rect x="25" y="785" width="1374" height="6" fill="#cbcbcb"/><rect x="25" y="791" width="1374" height="7" fill="#e3e3e3"/>
<g fill="#666"><path d="M254 772V782H255V772ZM261 772L256 777L261 782ZM276 772L272 777L276 782ZM288 772L292 777L288 782ZM302 772L307 777L302 782ZM308 772V782H309V772Z"/></g>
<path d="M316 769L324 784H357L364 769Z" fill="#fff" stroke="#aaa"/>
<path d="M364 784L371 769H412L404 784Z" fill="#e9e9e9" stroke="#aaa"/>
<text x="325" y="781" font-size="14" font-weight="500" fill="#333">模型</text>
<text x="368" y="780" font-size="13" fill="#555" textLength="31" lengthAdjust="spacingAndGlyphs">布局1</text>
<text x="33" y="808" font-size="13" fill="#444">命令行</text>
</svg>
</body></html>
